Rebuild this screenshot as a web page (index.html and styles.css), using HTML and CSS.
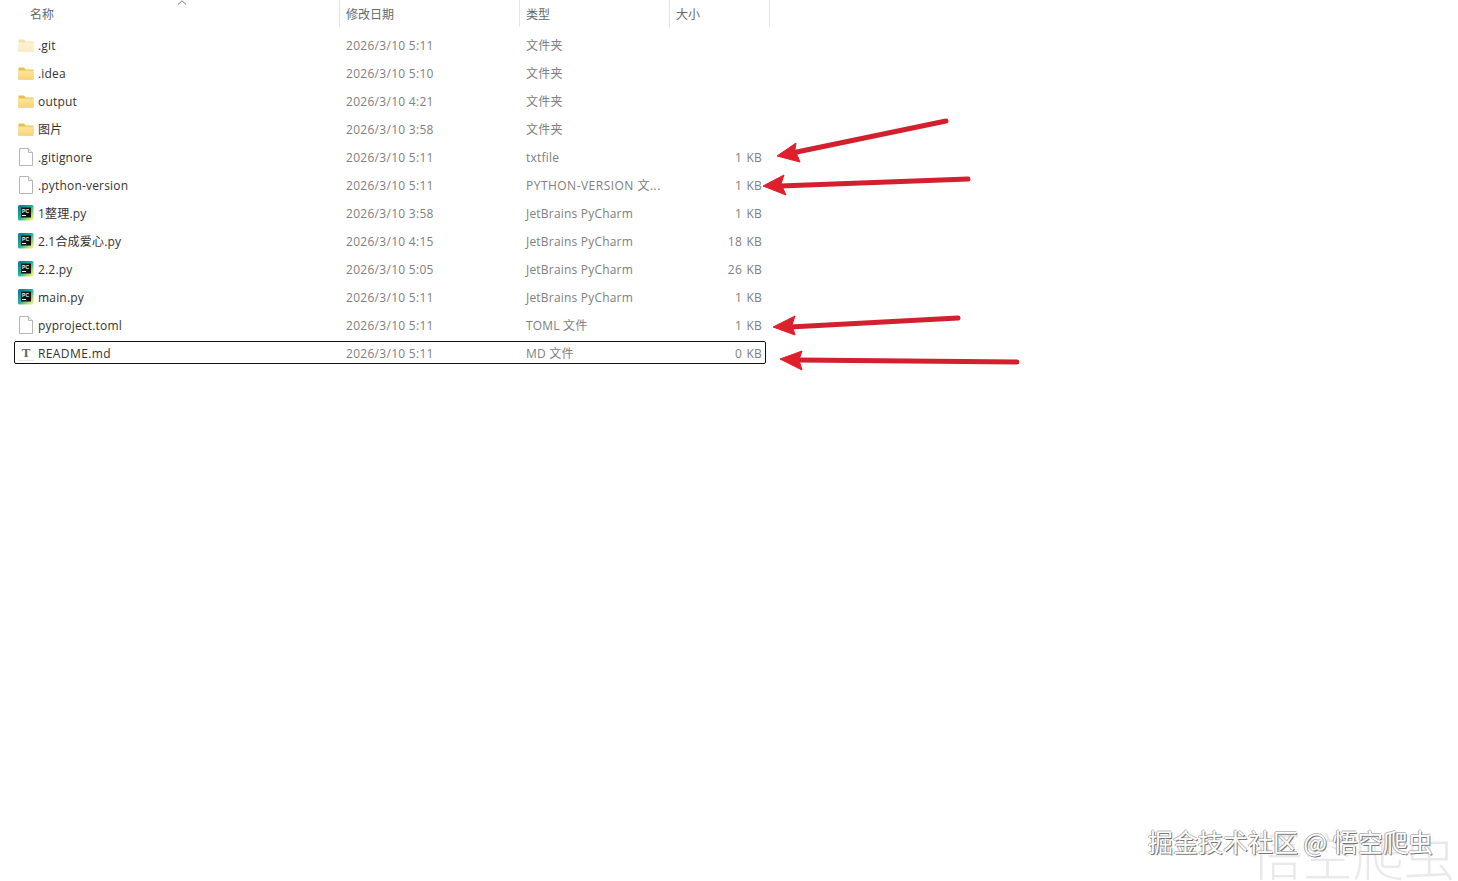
FILE: index.html
```html
<!DOCTYPE html>
<html lang="zh-CN">
<head>
<meta charset="utf-8">
<title>文件列表</title>
<link rel="stylesheet" href="styles.css">
</head>
<body>
<svg class="defs" width="0" height="0" aria-hidden="true">
  <defs>
    <linearGradient id="folderFill" x1="0" y1="0" x2="0" y2="1">
      <stop offset="0" stop-color="#fde69a"/>
      <stop offset="1" stop-color="#f7d376"/>
    </linearGradient>
    <linearGradient id="pcFill" x1="0" y1="0" x2="1" y2="1">
      <stop offset="0" stop-color="#0f6f8c"/>
      <stop offset="0.5" stop-color="#1fb5a0"/>
      <stop offset="0.85" stop-color="#d6e46a"/>
      <stop offset="1" stop-color="#fbf59a"/>
    </linearGradient>
    <symbol id="folder" viewBox="0 0 16 16">
      <path d="M0.500 2.500h5.500l1.500 2H15.500v10H0.500z" fill="#e9bd50"/>
      <path d="M0.500 5.500h15v9H0.500z" fill="url(#folderFill)"/>
    </symbol>
    <symbol id="file" viewBox="0 0 16 18">
      <path d="M1.500.5h9l4 4v13h-13z" fill="#fff" stroke="#b5b5b5"/>
      <path d="M10.500 .5v4h4" fill="#f1f1f1" stroke="#b5b5b5"/>
    </symbol>
    <symbol id="pycharm" viewBox="0 0 16 16">
      <rect x="0" y="0" width="15.500" height="15.500" rx="1.500" fill="url(#pcFill)"/>
      <rect x="3" y="2.500" width="10" height="10" fill="#111"/>
      <text x="4" y="7.500" class="pc-mark">PC</text>
      <rect x="4" y="10" width="4" height="1" fill="#eee"/>
    </symbol>
  </defs>
</svg>

<main class="explorer">
  <header class="columns">
    <div class="column column-name">名称<svg class="sort" width="10" height="5" viewBox="0 0 10 5"><path d="M1 4.500L5 .8l4 3.700" fill="none" stroke="#7d7d7d"/></svg></div>
    <div class="column column-date">修改日期</div>
    <div class="column column-type">类型</div>
    <div class="column column-size">大小</div>
  </header>

  <div class="rows">
    <div class="row"><span class="name"><svg class="icon faded"><use href="#folder"/></svg>.git</span><span class="meta date">2026/3/10 5:11</span><span class="meta">文件夹</span><span class="size"></span></div>
    <div class="row"><span class="name"><svg class="icon"><use href="#folder"/></svg>.idea</span><span class="meta date">2026/3/10 5:10</span><span class="meta">文件夹</span><span class="size"></span></div>
    <div class="row"><span class="name"><svg class="icon"><use href="#folder"/></svg>output</span><span class="meta date">2026/3/10 4:21</span><span class="meta">文件夹</span><span class="size"></span></div>
    <div class="row"><span class="name"><svg class="icon"><use href="#folder"/></svg>图片</span><span class="meta date">2026/3/10 3:58</span><span class="meta">文件夹</span><span class="size"></span></div>
    <div class="row"><span class="name"><svg class="icon icon-file"><use href="#file"/></svg>.gitignore</span><span class="meta date">2026/3/10 5:11</span><span class="meta">txtfile</span><span class="size">1 KB</span></div>
    <div class="row"><span class="name"><svg class="icon icon-file"><use href="#file"/></svg>.python-version</span><span class="meta date">2026/3/10 5:11</span><span class="meta caps">PYTHON-VERSION 文...</span><span class="size">1 KB</span></div>
    <div class="row"><span class="name"><svg class="icon"><use href="#pycharm"/></svg>1整理.py</span><span class="meta date">2026/3/10 3:58</span><span class="meta">JetBrains PyCharm</span><span class="size">1 KB</span></div>
    <div class="row"><span class="name"><svg class="icon"><use href="#pycharm"/></svg>2.1合成爱心.py</span><span class="meta date">2026/3/10 4:15</span><span class="meta">JetBrains PyCharm</span><span class="size">18 KB</span></div>
    <div class="row"><span class="name"><svg class="icon"><use href="#pycharm"/></svg>2.2.py</span><span class="meta date">2026/3/10 5:05</span><span class="meta">JetBrains PyCharm</span><span class="size">26 KB</span></div>
    <div class="row"><span class="name"><svg class="icon"><use href="#pycharm"/></svg>main.py</span><span class="meta date">2026/3/10 5:11</span><span class="meta">JetBrains PyCharm</span><span class="size">1 KB</span></div>
    <div class="row"><span class="name"><svg class="icon icon-file"><use href="#file"/></svg>pyproject.toml</span><span class="meta date">2026/3/10 5:11</span><span class="meta">TOML 文件</span><span class="size">1 KB</span></div>
    <div class="row row-focused"><span class="name name-wide"><span class="icon icon-text">T</span>README.md</span><span class="meta date">2026/3/10 5:11</span><span class="meta">MD 文件</span><span class="size">0 KB</span></div>
  </div>
</main>

<svg class="arrows" width="1458" height="881" viewBox="0 0 1458 881" aria-hidden="true">
  <g class="arrow">
    <path class="shaft" d="M946 121L792 153"/>
    <path class="head" d="M777 156L796 143L795 150L800 162Z"/>
    <path class="shaft" d="M968 179L780 186"/>
    <path class="head" d="M763 186L784 175L781 184L786 195Z"/>
    <path class="shaft" d="M958 318L790 327"/>
    <path class="head" d="M773 327L795 316L792 325L795 335Z"/>
    <path class="shaft" d="M1017 362L798 360"/>
    <path class="head" d="M780 359L802 351L799 360L802 370Z"/>
  </g>
</svg>

<div class="watermark-large">悟空爬虫</div>
<div class="watermark">掘金技术社区 @ 悟空爬虫</div>
</body>
</html>
```
FILE: styles.css
```css
* {
  box-sizing: border-box;
}

html,
body {
  margin: 0;
  height: 100%;
}

body {
  position: relative;
  overflow: hidden;
  background: #fff;
  color: #333;
  font-family: "Open Sans", "Noto Sans CJK SC", sans-serif;
  font-size: 12px;
}

.defs {
  position: absolute;
}

.pc-mark {
  fill: #f2f2f2;
  font-family: "Liberation Sans", sans-serif;
  font-size: 5px;
  font-weight: 700;
}

.explorer {
  width: 770px;
}

.columns {
  display: grid;
  grid-template-columns: 340px 180px 150px 100px;
  height: 27px;
  margin-bottom: 7px;
}

.column {
  position: relative;
  display: flex;
  align-items: center;
  height: 27px;
  padding-left: 6px;
  border-right: 1px solid #e5e5e5;
  color: #5f6a6f;
}

.column-name {
  padding-left: 30px;
}

.sort {
  position: absolute;
  left: 177px;
  top: 0;
}

.rows {
  display: flex;
  flex-direction: column;
  gap: 6px;
  margin-left: 14px;
  width: 752px;
}

.row {
  display: grid;
  grid-template-columns: 328px 180px 150px 86px;
  align-items: center;
  height: 22px;
  padding: 0 3px;
  border: 1px solid transparent;
  border-radius: 2px;
  white-space: nowrap;
}

.row-focused {
  height: 23px;
  margin-top: -1px;
  padding-top: 1px;
  border-color: #111;
}

.name {
  display: flex;
  align-items: center;
  gap: 4px;
  letter-spacing: 0.18px;
}

.name-wide {
  letter-spacing: 0.4px;
}

.icon {
  flex: none;
  width: 16px;
  height: 16px;
}

.icon-file {
  height: 18px;
}

.faded {
  opacity: 0.45;
}

.icon-text {
  display: block;
  color: #666;
  font-family: "Liberation Serif", serif;
  font-size: 13px;
  font-weight: 700;
  letter-spacing: 0;
  line-height: 15px;
  text-align: center;
  border-bottom: 1px solid #e8e8e8;
}

.meta {
  color: #808080;
  letter-spacing: 0.2px;
}

.date {
  letter-spacing: 0.29px;
}

.caps {
  letter-spacing: 0.48px;
}

.size {
  color: #808080;
  letter-spacing: 0.25px;
  word-spacing: 1px;
  text-align: right;
}

.arrows {
  position: absolute;
  left: 0;
  top: 0;
  pointer-events: none;
}

.shaft {
  fill: none;
  stroke: #d3202f;
  stroke-width: 5;
  stroke-linecap: round;
}

.head {
  fill: #e01f2d;
  stroke: #e01f2d;
  stroke-linejoin: round;
}

.watermark {
  position: absolute;
  left: 1148px;
  top: 823px;
  color: #fff;
  font-family: "Noto Sans CJK SC", sans-serif;
  font-size: 25px;
  line-height: 36px;
  white-space: nowrap;
  text-shadow: 1px 1px 0 #777, -1px 0 0 #aaa, 0 -1px 0 #bbb;
}

.watermark-large {
  position: absolute;
  left: 1251px;
  top: 816px;
  color: #e9e9e9;
  font-family: "Noto Sans CJK SC", sans-serif;
  font-size: 51px;
  font-weight: 300;
  line-height: 76px;
  white-space: nowrap;
}
```
